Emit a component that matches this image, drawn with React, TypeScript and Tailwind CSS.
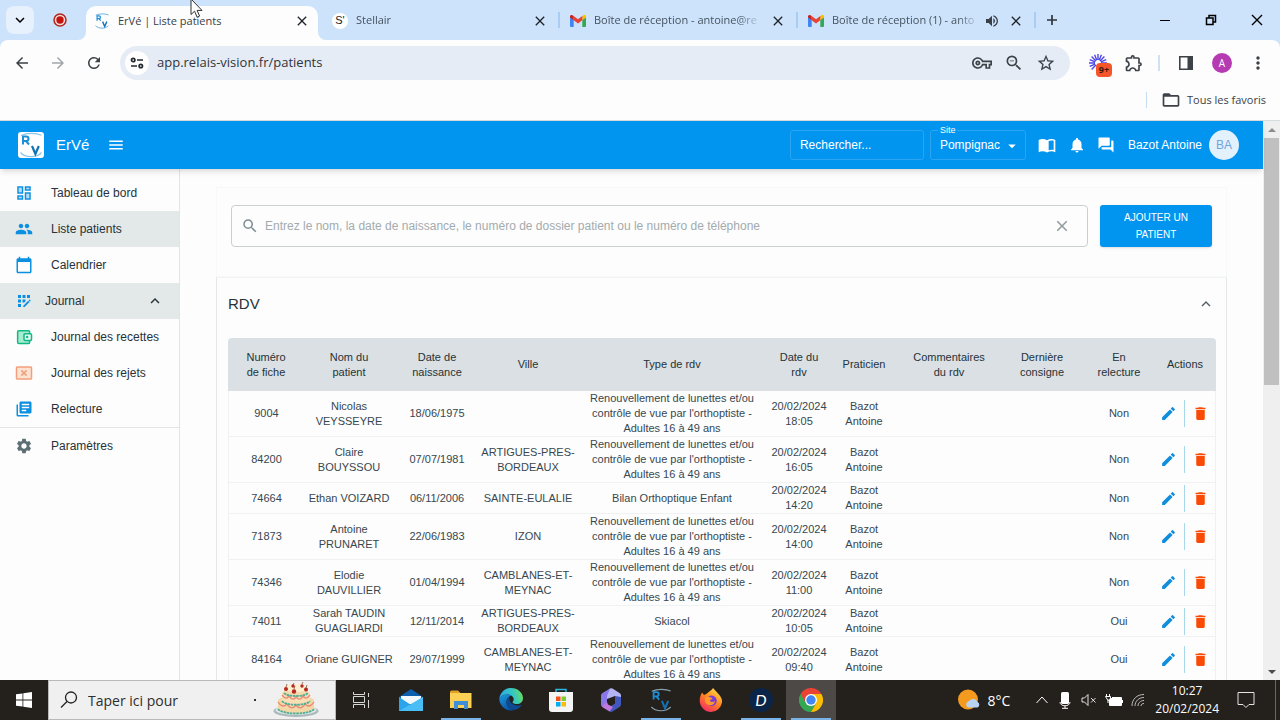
import React, { useState } from 'react';
import {
  MdAppRegistration, MdArrowBack, MdArrowDropDown, MdArrowForward, MdCalendarToday, MdClose, MdDelete, MdEdit,
  MdExpandLess, MdExpandMore, MdFolderOpen, MdForum, MdLibraryBooks, MdMenu, MdMoreVert, MdNotifications,
  MdOutlineExtension, MdOutlineVpnKey, MdPeople, MdRefresh, MdSearch, MdSettings, MdStarBorder, MdVolumeUp, MdZoomOut,
} from 'react-icons/md';

interface Rdv {
  fiche: string;
  nom: string;
  naissance: string;
  ville: string;
  type: string;
  date: string;
  relecture: string;
}

const RENOUVELLEMENT = "Renouvellement de lunettes et/ou contrôle de vue par l'orthoptiste - Adultes 16 à 49 ans";

const rdvs: Rdv[] = [
  { fiche: '9004', nom: 'Nicolas VEYSSEYRE', naissance: '18/06/1975', ville: '', type: RENOUVELLEMENT, date: '20/02/2024 18:05', relecture: 'Non' },
  { fiche: '84200', nom: 'Claire BOUYSSOU', naissance: '07/07/1981', ville: 'ARTIGUES-PRES-BORDEAUX', type: RENOUVELLEMENT, date: '20/02/2024 16:05', relecture: 'Non' },
  { fiche: '74664', nom: 'Ethan VOIZARD', naissance: '06/11/2006', ville: 'SAINTE-EULALIE', type: 'Bilan Orthoptique Enfant', date: '20/02/2024 14:20', relecture: 'Non' },
  { fiche: '71873', nom: 'Antoine PRUNARET', naissance: '22/06/1983', ville: 'IZON', type: RENOUVELLEMENT, date: '20/02/2024 14:00', relecture: 'Non' },
  { fiche: '74346', nom: 'Elodie DAUVILLIER', naissance: '01/04/1994', ville: 'CAMBLANES-ET-MEYNAC', type: RENOUVELLEMENT, date: '20/02/2024 11:00', relecture: 'Non' },
  { fiche: '74011', nom: 'Sarah TAUDIN GUAGLIARDI', naissance: '12/11/2014', ville: 'ARTIGUES-PRES-BORDEAUX', type: 'Skiacol', date: '20/02/2024 10:05', relecture: 'Oui' },
  { fiche: '84164', nom: 'Oriane GUIGNER', naissance: '29/07/1999', ville: 'CAMBLANES-ET-MEYNAC', type: RENOUVELLEMENT, date: '20/02/2024 09:40', relecture: 'Oui' },
];

const columns = [
  { label: 'Numéro\nde fiche', width: 'w-[76px]' },
  { label: 'Nom du\npatient', width: 'w-[90px]' },
  { label: 'Date de\nnaissance', width: 'w-[86px]' },
  { label: 'Ville', width: 'w-[96px]' },
  { label: 'Type de rdv', width: 'w-[192px]' },
  { label: 'Date du\nrdv', width: 'w-[62px]' },
  { label: 'Praticien', width: 'w-[68px]' },
  { label: 'Commentaires\ndu rdv', width: 'w-[102px]' },
  { label: 'Dernière\nconsigne', width: 'w-[84px]' },
  { label: 'En\nrelecture', width: 'w-[70px]' },
  { label: 'Actions', width: 'w-[62px]' },
];

/* ---------- icons ---------- */

const DashboardIcon = () => (
  <svg viewBox="0 0 24 24" className="size-[18px] fill-[#0b8fe0]">
    <path opacity=".3" d="M5 5h4v6H5zm10 8h4v6h-4zM5 17h4v2H5zM15 5h4v2h-4z" />
    <path d="M3 13h8V3H3v10zm2-8h4v6H5V5zm8 16h8V11h-8v10zm2-8h4v6h-4v-6zM13 3v6h8V3h-8zm6 4h-4V5h4v2zM3 21h8v-6H3v6zm2-4h4v2H5v-2z" />
  </svg>
);

const WalletIcon = () => (
  <svg viewBox="0 0 24 24" className="size-[18px]" fill="none" stroke="#12b886" strokeWidth="2">
    <rect x="3.5" y="3.5" width="16" height="17" rx="1.5" fill="#a8ecd0" />
    <rect x="12" y="7.5" width="10" height="9" rx="1.5" fill="#e3faf1" />
    <circle cx="16.2" cy="12" r="1.6" fill="#12b886" stroke="none" />
  </svg>
);

const RejetIcon = () => (
  <svg viewBox="0 0 24 24" className="size-[18px]" fill="none" stroke="#f2a07b" strokeWidth="2">
    <rect x="2" y="4" width="20" height="16" rx="1" fill="#fde3d3" />
    <path d="m8.5 8.5 7 7m0-7-7 7" />
  </svg>
);

const BookIcon = () => (
  <svg viewBox="0 0 24 24" className="size-5 fill-white">
    <path d="M2 6c3-1.600 7-1.500 10 .4V21c-3-1.700-7-1.800-10-.4z" />
    <path fillRule="evenodd" d="M12 6.400C15 4.500 19 4.400 22 6v14.600c-3-1.400-7-1.300-10 .4zm2 .9v11c2-.7 4-.8 6-.3v-11c-2-.5-4-.4-6 .3z" />
  </svg>
);

const RvLogo = ({ className, arc }: { className: string; arc: string }) => (
  <svg viewBox="0 0 26 26" className={className} fill="none">
    <path d="M3 3.500C9 .8 18 .8 23.500 3.200M2.500 20.500C7 26 19 26 23.500 20.500" stroke={arc} strokeWidth="1.200" />
    <path d="M5 12.500V4.500h3.200a2.300 2.300 0 0 1 0 4.600H5m3 0 3 3.400" stroke="#1e8fd6" strokeWidth="2" />
    <path d="m14 14 3.400 8 3.400-8" stroke="#1272b4" strokeWidth="2.200" />
  </svg>
);

const GmailIcon = () => (
  <svg viewBox="0 0 16 12" className="h-3 w-4 shrink-0">
    <path d="M0 2v9a1 1 0 0 0 1 1h2.700V4.800z" fill="#4285f4" />
    <path d="M16 2v9a1 1 0 0 1-1 1h-2.700V4.800z" fill="#34a853" />
    <path d="M12.300 1v4.300L16 2.600V1.500C16 0 14.300-.5 13.200.4z" fill="#fbbc04" />
    <path d="M0 1.500v1.100l3.700 2.700V1L2.800.4C1.700-.5 0 0 0 1.500z" fill="#c5221f" />
    <path d="M3.700 5.300V1L8 4.200 12.300 1v4.300L8 8.500z" fill="#ea4335" />
  </svg>
);

const ExtensionBadge = () => (
  <span className="relative flex size-5 items-center justify-center">
    <svg viewBox="0 0 20 20" className="size-5" stroke="#4f46e5" strokeWidth="1.400">
      <path d="M10 1v6M10 13v6M1 10h6M13 10h6M3.600 3.600l4.300 4.300M12.100 7.900l4.300-4.300M3.600 16.400l4.300-4.300M1.700 6.600l5.500 2.200M6.600 1.700l2.200 5.500M13.400 1.700l-2.200 5.500M18.300 6.600l-5.500 2.200M1.700 13.400l5.500-2.200" />
    </svg>
    <span className="absolute -right-1 -bottom-1 h-[14px] w-4 rounded-[4px] bg-[#f4552b] text-center text-[9px] leading-[14px] font-bold text-[#3b1408]">9+</span>
  </span>
);

const ChromeIcon = () => (
  <svg viewBox="0 0 24 24" className="size-6">
    <path d="M12 12 1.600 6A12 12 0 0 0 12 24l5.200-9z" fill="#34a853" />
    <path d="M12 12 17.200 15 12 24A12 12 0 0 0 22.400 6H12z" fill="#fbbc04" />
    <path d="M12 12 6.800 15 1.600 6A12 12 0 0 1 22.400 6H12z" fill="#ea4335" />
    <circle cx="12" cy="12" r="6" fill="#fff" />
    <circle cx="12" cy="12" r="4.700" fill="#4285f4" />
  </svg>
);

const EdgeIcon = () => (
  <svg viewBox="0 0 24 24" className="size-6">
    <defs>
      <linearGradient id="edgeTop" x1="0" x2="1" y1="0.500" y2="0.300">
        <stop offset="0" stopColor="#2aa7e8" />
        <stop offset="0.600" stopColor="#35c8c0" />
        <stop offset="1" stopColor="#6fdc5a" />
      </linearGradient>
      <linearGradient id="edgeBody" x1="0" x2="0.600" y1="0" y2="1">
        <stop offset="0" stopColor="#1b9de2" />
        <stop offset="1" stopColor="#0b4ea0" />
      </linearGradient>
    </defs>
    <path d="M.3 11C1 4.500 6 0 12 0c7 0 12 5 12 10 0 4-3 6-6 6-2.500 0-4.500-.8-4.500-1.800 0-.7 1.200-1.300 1.200-3 0-2.500-2.700-4.700-6-4.700C4.500 6.500 1.500 8.500.3 11z" fill="url(#edgeTop)" />
    <path d="M.3 11C1.500 8.500 4.500 6.500 8.700 6.500c1.600 0 3 .5 4 1.300C10 8 7.500 10.500 7.500 14c0 4.500 3.500 8.500 9.500 7.600A12 12 0 0 1 .3 11z" fill="url(#edgeBody)" />
    <path d="M7.500 14c0-2.300 1.200-4.200 2.800-5.200-.4 5 3 8.700 8.200 8.700 1.600 0 3-.4 4-1 .3.900-2.500 4.300-5.500 5.100-6 .9-9.500-3.100-9.500-7.600z" fill="#0d4a8f" />
  </svg>
);

const FirefoxIcon = () => (
  <svg viewBox="0 0 24 24" className="size-6">
    <defs>
      <linearGradient id="fox" x1="0.800" x2="0.200" y1="0" y2="1">
        <stop offset="0" stopColor="#ffe14a" />
        <stop offset="0.450" stopColor="#ff8a1e" />
        <stop offset="1" stopColor="#f0246a" />
      </linearGradient>
    </defs>
    <path d="M3 4.500 5 7l3-1.500C10 3 13 2.500 14 0c2 2 3 3.500 5 5.500 3 3 4.500 6 4 9A11.300 11.300 0 0 1 12 24 11.400 11.400 0 0 1 .7 13C.7 9.500 1.500 7 3 4.500z" fill="url(#fox)" />
    <circle cx="12.500" cy="12.800" r="5.200" fill="#7a3bd8" />
    <path d="M6 9.500c2-1.500 4-1 5.500 0l2 .5c-.5 1.500-2.500 1.500-2.500 3 1 1.500 3.500 1 5 0-.5 3.500-3.500 5-6.500 4S5.500 12.500 6 9.500z" fill="#ff9a2b" />
  </svg>
);

const CakeIcon = () => (
  <svg viewBox="0 0 46 36" className="h-9 w-[46px]">
    <ellipse cx="23" cy="29" rx="22.500" ry="6" fill="#aab8ba" />
    <ellipse cx="23" cy="28" rx="20.500" ry="5" fill="#dbe6e6" />
    <path d="M5 18v9c3 6 33 6 36 0v-9c-3-5-33-5-36 0z" fill="#f4d7a6" />
    <path d="M9 11v8c3 5 25 5 28 0v-8c-3-4-25-4-28 0z" fill="#f8dfb4" />
    <path d="M11 5v7c2 4 22 4 24 0V5z" fill="#f4d9ab" />
    <ellipse cx="23" cy="6" rx="12" ry="4" fill="#fdf0cf" />
    <path d="M5 20c3 5 6 5 9 2 3 5 6 5 9 1 3 4 6 4 9-1 3 3 6 3 9-2M9 13c3 4 5 4 7 1 3 4 5 4 7 1 3 3 5 3 7-1 2 3 4 3 7-1" fill="none" stroke="#e88a76" strokeWidth="1.400" />
    <path d="M5 27c5 6 31 6 36 0M9 19c4 5 24 5 28 0M11 11c3 4 21 4 24 0" fill="none" stroke="#4fae97" strokeWidth="1.800" strokeDasharray="2.500 .7" />
    <g fill="#b92626">
      <circle cx="13" cy="7" r="2" />
      <circle cx="21" cy="9.500" r="2.200" />
      <circle cx="33" cy="7.500" r="2" />
      <circle cx="20" cy="4" r="1.700" />
      <circle cx="29" cy="4" r="1.700" />
    </g>
    <path d="m13 5 1-3m6 1 1-2m8 1 1-2m3 6 1-3m-13 4 1-3" stroke="#7a3b2b" strokeWidth=".7" />
  </svg>
);

const MailIcon = () => (
  <svg viewBox="0 0 26 24" className="h-6 w-[26px]">
    <path d="M1 9 13 1l12 8v4H1z" fill="#0c5fae" />
    <path d="M3 8h20v8H3z" fill="#f2f8fd" />
    <path d="M1 9l12 8 12-8v14H1z" fill="#2aa4ea" />
    <path d="M1 23 25 9v14z" fill="#49bdf5" />
  </svg>
);

const ExplorerIcon = () => (
  <svg viewBox="0 0 24 22" className="h-[22px] w-6">
    <path d="M1 3a1.500 1.500 0 0 1 1.500-1.500H9L11.500 4H1z" fill="#e0a02a" />
    <path d="M1 4h21.500v15H1z" fill="#fccf55" />
    <path d="M5 12h14v8h-4v-4H9v4H5z" fill="#3f8fd6" />
  </svg>
);

const StoreIcon = () => (
  <svg viewBox="0 0 24 24" className="size-6">
    <path d="M7 5V1.500h10V5" fill="none" stroke="#29b6e0" strokeWidth="1.500" />
    <path d="M0 4h24v17a3 3 0 0 1-3 3H3a3 3 0 0 1-3-3z" fill="#f4f4f4" />
    <path d="M7 8.500h4.500V13H7z" fill="#f1511b" />
    <path d="M12.500 8.500H17V13h-4.500z" fill="#80cc28" />
    <path d="M7 14h4.500v4.500H7z" fill="#00adef" />
    <path d="M12.500 14H17v4.500h-4.500z" fill="#fbbc09" />
  </svg>
);

const OfficeIcon = () => (
  <svg viewBox="0 0 24 24" className="size-6">
    <path d="M11 .5 3.500 5A3 3 0 0 0 2 7.600v8.800A3 3 0 0 0 3.500 19L8 16V9l7-4.500z" fill="#8a78e6" />
    <path d="M11 .5a3 3 0 0 1 2.500 0L20.500 5A3 3 0 0 1 22 7.600V12l-6-4-8 3V8z" fill="#b3b4f4" />
    <path d="M22 9v7.400a3 3 0 0 1-1.500 2.600L13.500 23.500a3 3 0 0 1-3 0L9 20l7-4.500V8z" fill="#4257bd" />
    <path d="M3 18.500 8 14l1 2.500 5 2.500-3.500 4.500L3.500 19.200z" fill="#c277dc" />
  </svg>
);

/* ---------- browser chrome ---------- */

interface TabProps {
  title: string;
  icon: React.ReactNode;
  active?: boolean;
  sound?: boolean;
}

const BrowserTab = ({ title, icon, active, sound }: TabProps) => (
  <div className={`relative flex h-full w-[232px] items-center px-2 ${active ? 'rounded-t-[10px] bg-[#fdfdfd] pb-1 text-[#3a4046]' : 'pt-px text-[#45525e]'}`}>
    {active && (
      <>
        <svg viewBox="0 0 8 8" className="absolute bottom-0 -left-2 size-2 fill-[#fdfdfd]"><path d="M8 0v8H0a8 8 0 0 0 8-8z" /></svg>
        <svg viewBox="0 0 8 8" className="absolute -right-2 bottom-0 size-2 fill-[#fdfdfd]"><path d="M0 0v8h8a8 8 0 0 1-8-8z" /></svg>
      </>
    )}
    <span className="flex w-4 shrink-0 justify-center">{icon}</span>
    <span className={`ml-2 min-w-0 flex-1 overflow-hidden whitespace-nowrap ${active ? '' : '[mask-image:linear-gradient(to_right,black_85%,transparent)]'}`}>{title}</span>
    {sound && <MdVolumeUp className="ml-1 size-4 shrink-0 text-[#3a4046]" />}
    <button aria-label="Fermer l'onglet" className="ml-2 shrink-0 text-[#202428]"><MdClose size={16} /></button>
  </div>
);

const TabSeparator = () => <div className="flex w-[6px] justify-center"><div className="h-4 w-[2px] bg-[#a9cdf2]" /></div>;

const BrowserChrome = () => (
  <div className="shrink-0 bg-[#cde3fb] font-['Open_Sans','Noto_Sans',sans-serif] text-[11px]">
    <div className="flex h-10 items-center">
      <button aria-label="Rechercher dans les onglets" className="ml-[6px] flex size-7 items-center justify-center rounded-lg bg-[#e6f1fd]"><MdExpandMore size={18} /></button>
      <svg viewBox="0 0 14 14" className="ml-[19px] size-[14px]"><circle cx="7" cy="7" r="6" fill="#f3dede" stroke="#b3261e" strokeWidth="1.500" /><circle cx="7" cy="7" r="3.700" fill="#c5120c" /></svg>
      <div className="ml-[19px] flex h-full min-w-0 items-center">
        <div className="h-full pt-[6px]"><BrowserTab active title="ErVé | Liste patients" icon={<RvLogo className="size-4" arc="#3b9ad8" />} /></div>
        <div className="w-[6px]" />
        <BrowserTab title="Stellair" icon={<span className="flex size-4 items-center justify-center rounded-full bg-white font-['Liberation_Sans',sans-serif] text-[#222]">S'</span>} />
        <TabSeparator />
        <BrowserTab title="Boîte de réception - antoine@re" icon={<GmailIcon />} />
        <TabSeparator />
        <BrowserTab title="Boîte de réception (1) - anto" icon={<GmailIcon />} sound />
        <TabSeparator />
      </div>
      <button aria-label="Nouvel onglet" className="ml-[6px] shrink-0">
        <svg viewBox="0 0 16 16" className="size-4" stroke="#2f363c" strokeWidth="1.700"><path d="M8 3v10M3 8h10" /></svg>
      </button>
      <div className="ml-auto flex h-full shrink-0 text-black">
        <button aria-label="Réduire" className="flex w-[46px] items-center justify-center"><svg viewBox="0 0 12 12" className="size-3" stroke="currentColor"><path d="M1 6.500h10" /></svg></button>
        <button aria-label="Restaurer" className="flex w-[46px] items-center justify-center"><svg viewBox="0 0 12 12" className="size-3" fill="none" stroke="currentColor" strokeWidth="1.500"><path d="M1.500 4h6.500v6.500H1.500zM4 3.500v-2h6.500V8H8.500" /></svg></button>
        <button aria-label="Fermer" className="flex w-[46px] items-center justify-center"><svg viewBox="0 0 12 12" className="size-3" stroke="currentColor" strokeWidth="1.400"><path d="m1 1 10 10M11 1 1 11" /></svg></button>
      </div>
    </div>

    <div className="rounded-t-lg border-b border-[#d5dadd] bg-[#fdfdfd] text-[#3c4247]">
      <div className="flex h-[46px] items-center pr-3 pl-[13px]">
        <button aria-label="Précédent"><MdArrowBack size={18} /></button>
        <button aria-label="Suivant" className="ml-[18px] text-[#a2a6a9]"><MdArrowForward size={18} /></button>
        <button aria-label="Actualiser" className="ml-[18px]"><MdRefresh size={18} /></button>
        <div className="ml-[17px] flex h-[34px] flex-1 items-center rounded-full bg-[#e6ecf5] pr-[14px] pl-[5px]">
          <span className="flex size-6 items-center justify-center rounded-full bg-white">
            <svg viewBox="0 0 14 14" className="size-[14px]" fill="none" stroke="#24292e" strokeWidth="1.700">
              <circle cx="3.200" cy="4" r="1.700" /><path d="M7 4h6M1 10h6" /><circle cx="10.800" cy="10" r="1.700" />
            </svg>
          </span>
          <input aria-label="Adresse" defaultValue="app.relais-vision.fr/patients" className="ml-2 min-w-0 flex-1 bg-transparent text-[13px] text-[#2f353a] outline-none" />
          <div className="flex items-center gap-3">
            <MdOutlineVpnKey size={20} />
            <MdZoomOut size={20} />
            <MdStarBorder size={20} />
          </div>
        </div>
        <div className="ml-[18px] flex items-center">
          <ExtensionBadge />
          <MdOutlineExtension size={20} className="ml-4" />
          <div className="ml-[14px] h-4 w-[2px] bg-[#cfe1f3]" />
          <svg viewBox="0 0 16 16" className="ml-[18px] size-4"><path d="M1.800 1.800h12.400v12.400H1.800z" fill="none" stroke="#3c4247" strokeWidth="1.600" /><path d="M9.500 1.500h5v13h-5z" fill="#3c4247" /></svg>
          <span className="ml-[18px] size-5 rounded-full bg-[#b63bb3] text-center text-[10px] leading-5 text-white">A</span>
          <button aria-label="Menu" className="ml-4"><MdMoreVert size={20} /></button>
        </div>
      </div>
      <div className="flex h-[34px] items-center justify-end pr-[14px] pb-[6px]">
        <div className="h-4 w-px bg-[#c4dcf2]" />
        <MdFolderOpen size={20} className="ml-[14px]" />
        <span className="ml-[6px]">Tous les favoris</span>
      </div>
    </div>
  </div>
);

/* ---------- application ---------- */

const TopBar = () => (
  <header className="relative z-10 flex h-12 shrink-0 items-center bg-[#0295f0] pr-6 pl-[18px] text-[12px] text-white shadow-md">
    <span className="rounded-[3px] bg-white"><RvLogo className="size-[26px]" arc="#8cc6ea" /></span>
    <span className="ml-3 text-[15px]">ErVé</span>
    <button aria-label="Menu" className="ml-[18px]"><MdMenu size={18} /></button>
    <input aria-label="Rechercher" placeholder="Rechercher..." className="ml-auto h-[30px] w-[134px] rounded-[3px] border border-[#2ba5f2] bg-transparent px-[9px] outline-none placeholder:text-white" />
    <div className="relative ml-[6px] h-[30px] w-[96px] rounded-[3px] border border-[#2ba5f2]">
      <label htmlFor="site" className="absolute -top-[7px] left-[7px] bg-[#0295f0] px-[2px] text-[9px] leading-3">Site</label>
      <select id="site" className="h-full w-full appearance-none bg-transparent pl-[9px] outline-none">
        <option>Pompignac</option>
      </select>
      <MdArrowDropDown size={18} className="pointer-events-none absolute top-[6px] right-1" />
    </div>
    <button aria-label="Documentation" className="ml-[11px]"><BookIcon /></button>
    <button aria-label="Notifications" className="ml-[11px]"><MdNotifications size={18} /></button>
    <button aria-label="Messages" className="ml-[11px]"><MdForum size={18} /></button>
    <span className="ml-[13px]">Bazot Antoine</span>
    <span className="ml-[7px] size-[30px] rounded-full bg-[#e3f1fd] text-center leading-[30px] text-[#6fa5dc]">BA</span>
  </header>
);

const mainItems = [
  { label: 'Tableau de bord', icon: <DashboardIcon /> },
  { label: 'Liste patients', icon: <MdPeople size={18} />, selected: true },
  { label: 'Calendrier', icon: <MdCalendarToday size={18} /> },
];

const journalItems = [
  { label: 'Journal des recettes', icon: <WalletIcon /> },
  { label: 'Journal des rejets', icon: <RejetIcon /> },
  { label: 'Relecture', icon: <MdLibraryBooks size={18} /> },
];

const NavItem = ({ label, icon, selected }: { label: string; icon: React.ReactNode; selected?: boolean }) => (
  <a href="#" className={`flex h-9 items-center pl-[15px] ${selected ? 'bg-[#e3e8e8]' : ''}`}>
    <span className="text-[#0b8fe0]">{icon}</span>
    <span className="ml-[18px]">{label}</span>
  </a>
);

const Sidebar = () => {
  const [open, setOpen] = useState(true);
  return (
    <nav className="w-[180px] shrink-0 border-r border-[#e2e5e6] pt-[6px] text-[12px] text-[#263238]">
      {mainItems.map(item => <NavItem key={item.label} {...item} />)}
      <button onClick={() => setOpen(!open)} className="flex h-9 w-full items-center bg-[#e3e8e8] pr-[15px] pl-[15px]">
        <MdAppRegistration size={18} className="text-[#0b8fe0]" />
        <span className="ml-3">Journal</span>
        {open ? <MdExpandLess size={18} className="ml-auto" /> : <MdExpandMore size={18} className="ml-auto" />}
      </button>
      {open && journalItems.map(item => <NavItem key={item.label} {...item} />)}
      <div className="border-t border-[#e2e5e6]">
        <NavItem label="Paramètres" icon={<MdSettings size={18} className="text-[#5c6f74]" />} />
      </div>
    </nav>
  );
};

const SearchCard = () => {
  const [query, setQuery] = useState('');
  return (
    <div className="flex h-[90px] items-start border border-[#f7f8f8] px-[14px] pt-[17px]">
      <div className="flex h-[42px] flex-1 items-center rounded-[4px] border border-[#c9d0d2] pr-4 pl-[9px]">
        <MdSearch size={18} className="text-[#7f8e92]" />
        <input
          aria-label="Rechercher un patient"
          value={query}
          onChange={e => setQuery(e.target.value)}
          placeholder="Entrez le nom, la date de naissance, le numéro de dossier patient ou le numéro de téléphone"
          className="ml-[6px] min-w-0 flex-1 text-[12px] text-[#263238] outline-none placeholder:text-[#a3abae]"
        />
        <button onClick={() => setQuery('')} aria-label="Effacer" className="text-[#8f9a9e]"><MdClose size={18} /></button>
      </div>
      <button className="ml-3 h-[42px] w-[112px] rounded-[3px] bg-[#0295f0] px-5 text-[10px] leading-[17px] text-white uppercase shadow">Ajouter un patient</button>
    </div>
  );
};

const RdvTable = () => (
  <table className="w-full table-fixed border-separate border-spacing-0 text-center text-[11px] leading-[15px] text-[#37474f]">
    <thead>
      <tr className="h-[53px]">
        {columns.map(col => (
          <th key={col.label} className={`${col.width} bg-[#dae0e3] p-0 font-normal whitespace-pre-line text-[#263238] first:rounded-tl-[4px] last:rounded-tr-[4px]`}>{col.label}</th>
        ))}
      </tr>
    </thead>
    <tbody className="[&_td]:border-b [&_td]:border-[#f0f1f2] [&_td]:p-0 [&_td:first-child]:border-l [&_td:last-child]:border-r">
      {rdvs.map(rdv => (
        <tr key={rdv.fiche}>
          <td>{rdv.fiche}</td>
          <td>{rdv.nom}</td>
          <td>{rdv.naissance}</td>
          <td>{rdv.ville}</td>
          <td><div className="px-3">{rdv.type}</div></td>
          <td>{rdv.date}</td>
          <td><div className="px-3">Bazot Antoine</div></td>
          <td />
          <td />
          <td>{rdv.relecture}</td>
          <td>
            <div className="flex items-center justify-center">
              <button aria-label="Modifier" className="text-[#118ddd]"><MdEdit size={17} /></button>
              <span className="mx-[7px] h-[27px] w-px bg-[#a9d8ea]" />
              <button aria-label="Supprimer" className="text-[#f94a06]"><MdDelete size={17} /></button>
            </div>
          </td>
        </tr>
      ))}
    </tbody>
  </table>
);

const ScrollBar = () => (
  <div className="flex w-[17px] shrink-0 flex-col bg-[#efefef] px-px">
    <div className="flex h-[17px] items-center justify-center"><svg viewBox="0 0 8 4" className="h-1 w-2 fill-[#8d8d8d]"><path d="m4 0 4 4H0z" /></svg></div>
    <div className="min-h-0 flex-1"><div className="h-[47%] bg-[#c0c0c0]" /></div>
    <div className="flex h-[17px] items-center justify-center"><svg viewBox="0 0 8 4" className="h-1 w-2 fill-[#4b4b4b]"><path d="M0 0h8L4 4z" /></svg></div>
  </div>
);

/* ---------- taskbar ---------- */

const apps = [
  { name: 'Courrier', icon: <MailIcon /> },
  { name: 'Explorateur', icon: <ExplorerIcon />, running: true },
  { name: 'Edge', icon: <EdgeIcon /> },
  { name: 'Store', icon: <StoreIcon /> },
  { name: 'Microsoft 365', icon: <OfficeIcon /> },
  { name: 'ErVé', icon: <RvLogo className="size-6" arc="#8aa2ae" />, running: true },
  { name: 'Firefox', icon: <FirefoxIcon /> },
  { name: 'D', icon: <span className="size-6 rounded-full bg-[#0a2547] text-center font-['Lato',sans-serif] text-[16px] leading-6 text-white italic">D</span>, running: true },
  { name: 'Chrome', icon: <ChromeIcon />, running: true, active: true },
];

const Taskbar = () => (
  <footer className="flex h-10 shrink-0 bg-[#24201c] font-['Open_Sans','Noto_Sans',sans-serif] text-white">
    <button aria-label="Démarrer" className="flex w-12 items-center justify-center">
      <svg viewBox="0 0 16 16" className="size-4 fill-white"><path d="M0 2.300 6.500 1.400v6.200H0zM7.300 1.300 16 0v7.600H7.300zM0 8.400h6.500v6.200L0 13.700zM7.300 8.400H16V16l-8.700-1.300z" /></svg>
    </button>
    <div className="flex w-[288px] items-center border border-[#b9b9b9] bg-[#f0f0f0] pl-[11px] text-[#2d2d2d]">
      <svg viewBox="0 0 18 18" className="size-[18px]" fill="none" stroke="#222" strokeWidth="1.300"><circle cx="11" cy="6.500" r="5.500" /><path d="m7 10.500-6 6" /></svg>
      <input aria-label="Taper ici pour rechercher" placeholder="Taper ici pour" className="ml-[10px] w-[150px] text-[14px] outline-none placeholder:text-[#2d2d2d]" />
      <span className="ml-4 size-[2px] bg-[#333]" />
      <span className="ml-[17px]"><CakeIcon /></span>
    </div>
    <button aria-label="Applications actives" className="flex w-[50px] items-center justify-center">
      <svg viewBox="0 0 17 16" className="h-4 w-[17px]" fill="none" stroke="#d8d8d8"><path d="M.5 0v2.500h11V0M.5 4.500h11v6H.5zM.5 16v-3.500h11V16M15.500 1v4M15.500 8v8" /></svg>
    </button>
    {apps.map(app => (
      <button key={app.name} aria-label={app.name} className={`relative flex w-[50px] items-center justify-center ${app.active ? 'bg-[#4c4946]' : ''}`}>
        {app.icon}
        {app.running && <span className="absolute inset-x-[5px] bottom-0 h-[2px] bg-[#79b3e8]" />}
      </button>
    ))}
    <div className="ml-auto flex items-center">
      <svg viewBox="0 0 24 22" className="h-[22px] w-6">
        <circle cx="11" cy="10.500" r="10" fill="#f39a1f" />
        <path d="M11 18.500a3.500 3.500 0 0 1 1-6.500 5 5 0 0 1 8.500 1 3 3 0 0 1 0 5.500z" fill="#b9d3f5" />
      </svg>
      <span className="ml-[6px] text-[14px]">8°C</span>
      <svg viewBox="0 0 12 8" className="ml-[26px] h-2 w-3" fill="none" stroke="#fff"><path d="m.5 7 5.500-6 5.500 6" /></svg>
      <svg viewBox="0 0 12 18" className="ml-[11px] h-[18px] w-3"><rect x="2" y="1" width="8" height="12" rx="1.500" fill="#fff" /><path d="M1 11c0 5 10 5 10 0M6 15v2M3 17.300h6" fill="none" stroke="#fff" /></svg>
      <svg viewBox="0 0 16 14" className="ml-[10px] h-[14px] w-4" fill="none" stroke="#e4e4e4"><path d="M1 5h2.500L7 1.500v11L3.500 9H1zM10 5l4.500 4.500M14.500 5 10 9.500" /></svg>
      <svg viewBox="0 0 18 14" className="ml-2 h-[14px] w-[18px]"><path d="M5 5h11v7H5z" fill="#fff" /><path d="M4.500 7v5.500h12v-8H7M17.500 7v3M1.500 1v2M4.500 1v2M.5 3.500h5v2l-2.500 2zM3 7v3" fill="none" stroke="#fff" /></svg>
      <svg viewBox="0 0 14 14" className="ml-2 h-[14px] w-[14px]" fill="none" stroke="#bdbdbd"><path d="M1 13C1 6 6 1.500 13 1.500M4 13c0-5 4-8.500 9-8.500M7 13c0-3 2.500-5.500 6-5.500M10 13c0-1.500 1-2.500 3-2.500" /></svg>
      <div className="ml-[10px] text-center text-[12px] leading-[18px]">
        <div>10:27</div>
        <div>20/02/2024</div>
      </div>
      <svg viewBox="0 0 18 16" className="mr-5 ml-[18px] h-4 w-[18px]" fill="none" stroke="#e4e4e4"><path d="M1 .500h16v12h-5L9 15.500l-3-3H1z" /></svg>
      <div className="mr-1 h-10 w-px bg-[#6a6764]" />
    </div>
  </footer>
);

const App: React.FC = () => {
  const [expanded, setExpanded] = useState(true);

  return (
    <div className="relative flex h-screen flex-col overflow-hidden bg-[#fdfdfd] font-['Liberation_Sans',Arial,sans-serif]">
      <BrowserChrome />
      <div className="flex min-h-0 flex-1">
        <div className="flex min-w-0 flex-1 flex-col">
          <TopBar />
          <div className="flex min-h-0 flex-1">
            <Sidebar />
            <main className="min-w-0 flex-1 overflow-hidden px-9 pt-[18px]">
              <SearchCard />
              <section className="border border-[#e4e7e8] border-t-[#f3f4f4] px-[11px]">
                <button onClick={() => setExpanded(!expanded)} className="flex h-[60px] w-full items-center justify-between pb-2 text-[#263238]">
                  <span className="text-[15px]">RDV</span>
                  <MdExpandLess size={18} className="text-[#546066]" />
                </button>
                {expanded && <RdvTable />}
              </section>
            </main>
          </div>
        </div>
        <ScrollBar />
      </div>
      <Taskbar />
      <svg viewBox="0 0 13 20" className="pointer-events-none absolute -top-[1px] left-[190px] h-5 w-[13px]"><path d="M1 0v15.500l3.600-3.300 2.500 6 2.500-1.100-2.500-5.700H12z" fill="#fff" stroke="#333" /></svg>
    </div>
  );
};

export default App;
